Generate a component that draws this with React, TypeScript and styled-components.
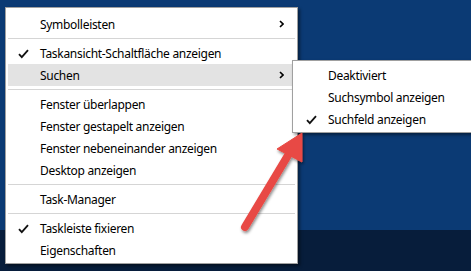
import styled, { createGlobalStyle } from 'styled-components'

const Global = createGlobalStyle`
  html, body { margin: 0; padding: 0; }
  body {
    width: 471px;
    height: 271px;
    overflow: hidden;
    font-family: "Noto Sans", "Liberation Sans", sans-serif;
  }
`

const Desktop = styled.div`
  position: relative;
  width: 471px;
  height: 271px;
  display: grid;
  grid-template-rows: 230px 1fr;
  background: #0b3a74;
`

const Taskbar = styled.div`
  grid-row: 2;
  background: #071d3b;
`

const Menu = styled.ul<{ $left: number; $top: number; $width: number; $padTop: number }>`
  position: absolute;
  left: ${p => p.$left}px;
  top: ${p => p.$top}px;
  width: ${p => p.$width}px;
  margin: 0;
  padding: ${p => p.$padTop}px 2px 2px;
  list-style: none;
  background: #fff;
  border: 1px solid #a0a0a0;
  box-shadow: 2px 2px 3px rgba(0, 0, 0, 0.45);
  box-sizing: border-box;
`

const Item = styled.li<{ $active?: boolean; $indent: number }>`
  display: flex;
  align-items: center;
  height: 22px;
  padding-left: ${p => p.$indent}px;
  position: relative;
  font-size: 12px;
  color: #000;
  background: ${p => (p.$active ? '#e3e3e3' : 'transparent')};
  white-space: nowrap;
`

const Check = styled.svg<{ $x: number }>`
  position: absolute;
  left: ${p => p.$x}px;
  top: 7px;
`

const Label = styled.span`
  flex: 1;
  padding-top: 1px;
  letter-spacing: -0.3px;
`

const Chevron = styled.svg`
  margin-right: 11px;
`

const Separator = styled.li`
  height: 7px;
  display: flex;
  align-items: center;
  &::after {
    content: '';
    flex: 1;
    height: 1px;
    background: #d5d5d5;
  }
`

const Arrow = styled.svg`
  position: absolute;
  left: 0;
  top: 0;
  pointer-events: none;
`

const Tick = ({ x }: { x: number }) => (
  <Check $x={x} width="11" height="10" viewBox="0 0 11 10">
    <path d="M1 5.2 L3.8 8.2 L10 1.2" fill="none" stroke="#111" strokeWidth="1.8" />
  </Check>
)

const More = () => (
  <Chevron width="5" height="8" viewBox="0 0 5 8">
    <path d="M1 1 L4 4 L1 7" fill="none" stroke="#000" strokeWidth="1.6" />
  </Chevron>
)

type Entry = { label?: string; check?: boolean; sub?: boolean; active?: boolean; sep?: boolean }

const mainItems: Entry[] = [
  { label: 'Symbolleisten', sub: true },
  { sep: true },
  { label: 'Taskansicht-Schaltfläche anzeigen', check: true },
  { label: 'Suchen', sub: true, active: true },
  { sep: true },
  { label: 'Fenster überlappen' },
  { label: 'Fenster gestapelt anzeigen' },
  { label: 'Fenster nebeneinander anzeigen' },
  { label: 'Desktop anzeigen' },
  { sep: true },
  { label: 'Task-Manager' },
  { sep: true },
  { label: 'Taskleiste fixieren', check: true },
  { label: 'Eigenschaften' },
]

const subItems: Entry[] = [
  { label: 'Deaktiviert' },
  { label: 'Suchsymbol anzeigen' },
  { label: 'Suchfeld anzeigen', check: true },
]

const renderItems = (items: Entry[], indent: number, checkX: number) =>
  items.map((it, i) =>
    it.sep ? (
      <Separator key={i} />
    ) : (
      <Item key={i} $active={it.active} $indent={indent}>
        {it.check && <Tick x={checkX} />}
        <Label>{it.label}</Label>
        {it.sub && <More />}
      </Item>
    )
  )

export default function App() {
  return (
    <>
      <Global />
      <Desktop>
        <Taskbar />
        <Menu $left={5} $top={7} $width={293} $padTop={5}>
          {renderItems(mainItems, 32, 10)}
        </Menu>
        <Menu $left={292} $top={60} $width={200} $padTop={3}>
          {renderItems(subItems, 33, 11)}
        </Menu>
        <Arrow width="471" height="271" viewBox="0 0 471 271">
          <defs>
            <filter id="sh" x="-20%" y="-20%" width="140%" height="140%">
              <feDropShadow dx="1" dy="2" stdDeviation="1.5" floodColor="#000" floodOpacity="0.45" />
            </filter>
          </defs>
          <g filter="url(#sh)" fill="#e84a44" stroke="#e84a44">
            <line x1="245" y1="227" x2="290" y2="152" strokeWidth="8" strokeLinecap="round" />
            <path d="M302 133 L277 149 L302 162 Z" strokeWidth="1" strokeLinejoin="round" />
          </g>
        </Arrow>
      </Desktop>
    </>
  )
}
